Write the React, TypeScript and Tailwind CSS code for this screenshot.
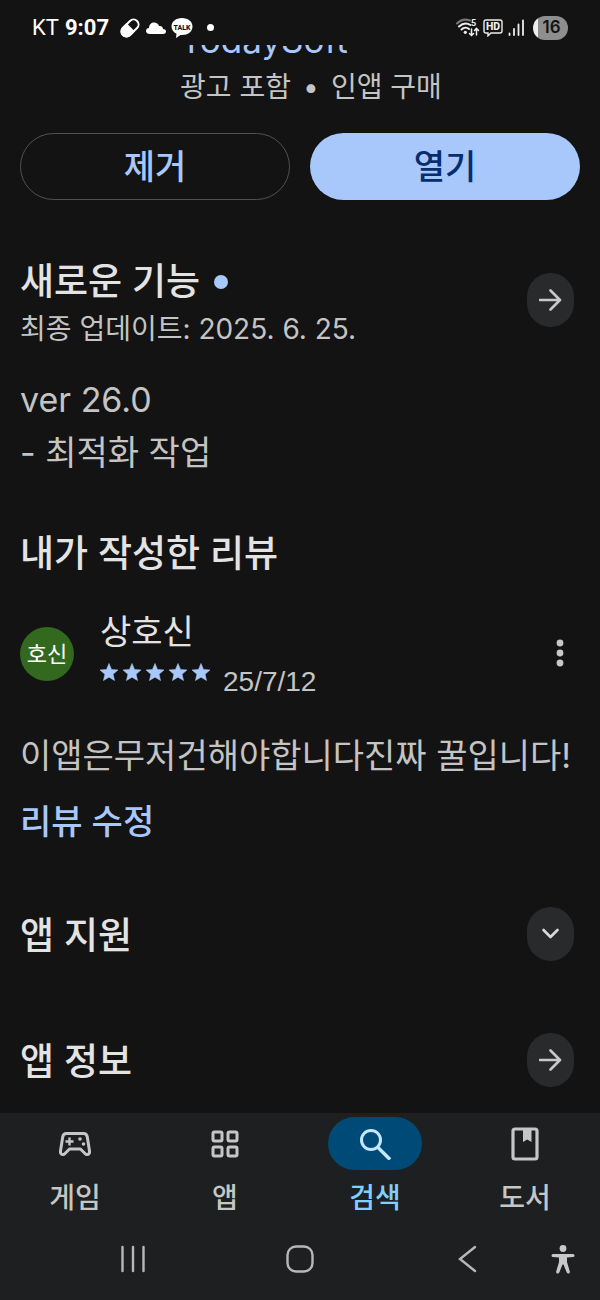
import { useState } from "react";
import type { ReactNode } from "react";

const ArrowIcon = () => (
  <svg width="24" height="24" viewBox="0 0 24 24" fill="none" stroke="#c8c9ca" strokeWidth="2.600" strokeLinecap="round" strokeLinejoin="round">
    <path d="M1 12H21M11.500 2.500L21 12L11.500 21.500" />
  </svg>
);

const ChevronIcon = () => (
  <svg width="24" height="24" viewBox="0 0 24 24" fill="none" stroke="#d8d9da" strokeWidth="2.600" strokeLinecap="round" strokeLinejoin="round">
    <path d="M4.500 8L11.500 15L18.500 8" />
  </svg>
);

const Star = () => (
  <svg width="18" height="18" viewBox="2 2 20 19" fill="#a8c7fa" stroke="#a8c7fa" strokeWidth="0.600">
    <path d="M12 17.270L18.180 21L16.540 13.970L22 9.240L14.810 8.630L12 2L9.190 8.630L2 9.240L7.460 13.970L5.820 21Z" />
  </svg>
);

const GameIcon = () => (
  <svg width="34" height="26" viewBox="0 0 34 26" fill="none">
    <path
      d="M8.500 2.500H25.500C27.800 2.500 29 4 29.300 6L31.500 20C32 23.500 28.800 24.500 27 22.500L22.500 18H11.500L7 22.500C5.200 24.500 2 23.500 2.500 20L4.700 6C5 4 6.200 2.500 8.500 2.500Z"
      stroke="#c4c7c5"
      strokeWidth="3"
      strokeLinejoin="round"
    />
    <path d="M11.500 6.500V14.500M7.500 10.500H15.500" stroke="#c4c7c5" strokeWidth="2.400" />
    <circle cx="22" cy="8" r="1.800" fill="#c4c7c5" />
    <circle cx="25.500" cy="13" r="1.800" fill="#c4c7c5" />
  </svg>
);

const AppsIcon = () => (
  <svg width="28" height="28" viewBox="0 0 28 28" fill="none" stroke="#c4c7c5" strokeWidth="3">
    <rect x="2" y="2" width="9" height="9" rx="1.500" />
    <rect x="17" y="2" width="9" height="9" rx="1.500" />
    <rect x="2" y="17" width="9" height="9" rx="1.500" />
    <rect x="17" y="17" width="9" height="9" rx="1.500" />
  </svg>
);

const SearchIcon = () => (
  <svg width="32" height="32" viewBox="0 0 32 32" fill="none" stroke="#c2e7ff" strokeWidth="3">
    <circle cx="12" cy="12" r="9.500" />
    <path d="M18.500 19L31 31.500" strokeWidth="3.400" />
  </svg>
);

const BookIcon = () => (
  <svg width="28" height="34" viewBox="0 0 28 34" fill="none">
    <rect x="2" y="2" width="24" height="30" rx="2" stroke="#c4c7c5" strokeWidth="3.200" />
    <path d="M12 2H20.500V15L16.250 12.500L12 15Z" fill="#c4c7c5" />
  </svg>
);

const tabs: { label: string; icon: ReactNode }[] = [
  { label: "게임", icon: <GameIcon /> },
  { label: "앱", icon: <AppsIcon /> },
  { label: "검색", icon: <SearchIcon /> },
  { label: "도서", icon: <BookIcon /> },
];

const RoundButton = ({ label, children }: { label: string; children: ReactNode }) => (
  <button
    aria-label={label}
    className="flex h-[54px] w-[47px] shrink-0 items-center justify-center rounded-full bg-[#282a2c]"
  >
    {children}
  </button>
);

const StatusBar = () => (
  <div className="flex h-[45px] items-center justify-between px-8 pt-[10px] font-['Roboto','Noto_Sans_CJK_KR',sans-serif] text-[22px] text-white">
    <div className="flex items-center">
      <span>KT</span>
      <span className="ml-[6px] font-bold">9:07</span>
      <svg className="ml-[10px]" width="22" height="22" viewBox="0 0 22 22">
        <g transform="rotate(-45 11 11)">
          <rect x="1" y="6" width="20" height="10" rx="5" fill="none" stroke="#fff" strokeWidth="2" />
          <path d="M12 5H6A6 6 0 0 0 6 17H12Z" fill="#fff" />
        </g>
      </svg>
      <svg className="ml-1" width="22" height="16" viewBox="0 0 22 16" fill="#fff">
        <path d="M5 14C2 14 1 12.500 1 11C1 9 2.500 8 4 8C4 4.500 6.500 2.500 9 2.500C11.500 2.500 13.500 4 14 6C16.500 5.500 18 7 18 9C20 9 21 10.200 21 11.500C21 13 20 14 18 14Z" />
      </svg>
      <svg className="ml-1" width="22" height="20" viewBox="0 0 22 20">
        <path d="M11 0C17 0 21.500 3.500 21.500 8.500C21.500 13.500 17 17 11 17L9.500 16.900L5 20L5.500 15.700C2.500 14.300 0.500 11.700 0.500 8.500C0.500 3.500 5 0 11 0Z" fill="#fff" />
        <text x="11" y="11.500" textAnchor="middle" fontSize="7" fontWeight="800" fill="#131313">
          TALK
        </text>
      </svg>
      <span className="ml-[14px] size-[7px] rounded-full bg-white" />
    </div>

    <div className="flex items-center">
      <svg width="24" height="20" viewBox="0 0 24 20" fill="none" strokeLinecap="round">
        <path d="M1 5.500C5 1.500 10 1 14 2.500" stroke="#777" strokeWidth="2" />
        <path d="M3 8.500C6.500 5.200 11 4.800 14.500 7" stroke="#eee" strokeWidth="2" />
        <path d="M5.500 11.500C7.800 9.300 11 9.200 13 11" stroke="#eee" strokeWidth="2" />
        <circle cx="9.300" cy="14.300" r="1.600" fill="#eee" />
        <text x="15" y="8" fontSize="9" fontWeight="700" fill="#eee">
          5
        </text>
        <path d="M15.500 11V17M13.500 15.500L15.500 17.500L17.500 15.500M20.500 17V10.500M18.500 12.500L20.500 10.300L22.500 12.500" stroke="#eee" strokeWidth="1.500" />
      </svg>
      <svg className="ml-[3px]" width="20" height="18" viewBox="0 0 20 18">
        <path d="M3 1H17Q19 1 19 3V12Q19 14 17 14H8L5 16.800V14H3Q1 14 1 12V3Q1 1 3 1Z" fill="none" stroke="#eee" strokeWidth="1.400" />
        <text x="10" y="11.300" textAnchor="middle" fontSize="10.500" fontWeight="800" fill="#eee">
          HD
        </text>
      </svg>
      <svg className="ml-[5px]" width="17" height="18" viewBox="0 0 17 18" stroke="#eee" strokeWidth="1.800" strokeLinecap="round">
        <path d="M1.500 14.500V16M6 10V16M10.500 5.500V16M15 1.500V16" />
      </svg>
      <span className="ml-2 flex h-6 w-[35px] items-center justify-center rounded-full bg-[linear-gradient(90deg,#eee_5px,#8e8e8e_5px)] pl-[2px] font-['Inter',sans-serif] text-[17px] font-semibold text-[#131313]">
        16
      </span>
    </div>
  </div>
);

const App = () => {
  const [active, setActive] = useState("검색");

  return (
    <div className="flex min-h-screen flex-col bg-[#131313] font-['Inter','Noto_Sans_CJK_KR',sans-serif] text-[#c4c4c4]">
      <StatusBar />

      <main className="flex-1 px-5">
        <div className="pl-40">
          {/* developer name, scrolled half under the status bar */}
          <div className="flex h-[18px] flex-col justify-end overflow-hidden">
            <a href="#developer" className="text-[35px] leading-[46px] text-[#a8c7fa]">
              TodaySoft
            </a>
          </div>
          <p className="mt-1 text-[28px] leading-[40px]">
            광고 포함<span className="inline-block w-10 text-center">•</span>인앱 구매
          </p>
        </div>

        <div className="mt-[26px] grid grid-cols-2 gap-5 text-[34px] font-medium">
          <button className="h-[67px] rounded-full border border-[#505250] text-[#a8c7fa]">제거</button>
          <button className="h-[67px] rounded-full bg-[#a8c7fa] text-[#062e6f]">열기</button>
        </div>

        <section className="mt-[57px]">
          <div className="flex items-start justify-between">
            <div>
              <h2 className="flex items-center text-[37px] leading-[50px] font-medium text-[#e3e3e3]">
                새로운 기능
                <span className="ml-[14px] size-[14px] rounded-full bg-[#a8c7fa]" />
              </h2>
              <p className="text-[28px] leading-[44px]">최종 업데이트: 2025. 6. 25.</p>
            </div>
            <div className="mt-4 mr-[6px]">
              <RoundButton label="새로운 기능">
                <ArrowIcon />
              </RoundButton>
            </div>
          </div>
          <p className="mt-[22px] text-[34px] leading-[53px]">
            ver 26.0
            <br />- 최적화 작업
          </p>
        </section>

        <section className="mt-[50px]">
          <h2 className="text-[37px] leading-[50px] font-medium text-[#e3e3e3]">내가 작성한 리뷰</h2>

          <div className="mt-[30px] flex items-start">
            <div className="mt-[18px] flex size-[54px] items-center justify-center rounded-full bg-[#33691e] text-[22px] text-white">
              호신
            </div>
            <div className="ml-[26px] flex-1">
              <p className="text-[34px] leading-[46px] text-[#e3e3e3]">상호신</p>
              <div className="flex items-start">
                <div className="mt-2 flex gap-[5px]" role="img" aria-label="5">
                  <Star />
                  <Star />
                  <Star />
                  <Star />
                  <Star />
                </div>
                <span className="ml-[13px] font-['Liberation_Sans',sans-serif] text-[28px] leading-[54px]">25/7/12</span>
              </div>
            </div>
            <button aria-label="더보기" className="mt-7 mr-3 flex h-8 w-4 items-center justify-center">
              <svg width="8" height="28" viewBox="0 0 8 28" fill="#c8c8c8">
                <circle cx="4" cy="4" r="3.400" />
                <circle cx="4" cy="14" r="3.400" />
                <circle cx="4" cy="24" r="3.400" />
              </svg>
            </button>
          </div>

          <p className="mt-5 text-[34px] leading-[53px] whitespace-nowrap">이앱은무저건해야합니다진짜 꿀입니다!</p>
          <a href="#edit" className="mt-5 block text-[34px] leading-[40px] font-medium text-[#a8c7fa]">
            리뷰 수정
          </a>
        </section>

        <section className="mt-[65px] flex items-end justify-between">
          <h2 className="text-[37px] leading-[50px] font-medium text-[#e3e3e3]">앱 지원</h2>
          <div className="mr-[6px]">
            <RoundButton label="앱 지원">
              <ChevronIcon />
            </RoundButton>
          </div>
        </section>

        <section className="mt-[72px] mb-6 flex items-end justify-between">
          <h2 className="text-[37px] leading-[50px] font-medium text-[#e3e3e3]">앱 정보</h2>
          <div className="mr-[6px]">
            <RoundButton label="앱 정보">
              <ArrowIcon />
            </RoundButton>
          </div>
        </section>
      </main>

      <footer className="bg-[#1e1f20]">
        <nav className="grid grid-cols-4 pt-1">
          {tabs.map((tab) => (
            <button key={tab.label} onClick={() => setActive(tab.label)} className="flex flex-col items-center">
              <span
                className={`flex h-[53px] w-[94px] items-center justify-center rounded-full ${
                  active === tab.label ? "bg-[#004a77]" : ""
                }`}
              >
                {tab.icon}
              </span>
              <span
                className={`mt-2 text-[28px] leading-[40px] font-medium ${
                  active === tab.label ? "text-[#7fcfff]" : "text-[#c4c7c5]"
                }`}
              >
                {tab.label}
              </span>
            </button>
          ))}
        </nav>

        <div className="grid h-[82px] grid-cols-[49px_1fr_1fr_1fr_49px] items-center justify-items-center">
          <span />
          <button aria-label="최근 앱">
            <svg width="26" height="28" viewBox="0 0 26 28" stroke="#b8b8b8" strokeWidth="2.400" strokeLinecap="round">
              <path d="M2.500 2V26M13 2V26M23.500 2V26" />
            </svg>
          </button>
          <button aria-label="홈">
            <svg width="28" height="28" viewBox="0 0 28 28" fill="none" stroke="#b8b8b8" strokeWidth="2.400">
              <rect x="1.500" y="1.500" width="25" height="25" rx="8.500" />
            </svg>
          </button>
          <button aria-label="뒤로">
            <svg width="20" height="28" viewBox="0 0 20 28" fill="none" stroke="#b8b8b8" strokeWidth="2.400" strokeLinecap="round">
              <path d="M18 2L3 14L18 26" />
            </svg>
          </button>
          <button aria-label="접근성" className="justify-self-start">
            <svg width="24" height="30" viewBox="0 0 24 30" fill="#c8c8c8">
              <circle cx="12" cy="4.500" r="3.400" />
              <path d="M2 10H22Q23.500 10 23.500 11.500Q23.500 13 22 13L16 13.500V18L18.800 27.500Q19 29.500 17.500 29.500Q16 29.500 15.500 28L12.500 20.500H11.500L8.500 28Q8 29.500 6.500 29.500Q5 29.500 5.200 27.500L8 18V13.500L2 13Q0.500 13 0.500 11.500Q0.500 10 2 10Z" />
            </svg>
          </button>
        </div>
      </footer>
    </div>
  );
};

export default App;
